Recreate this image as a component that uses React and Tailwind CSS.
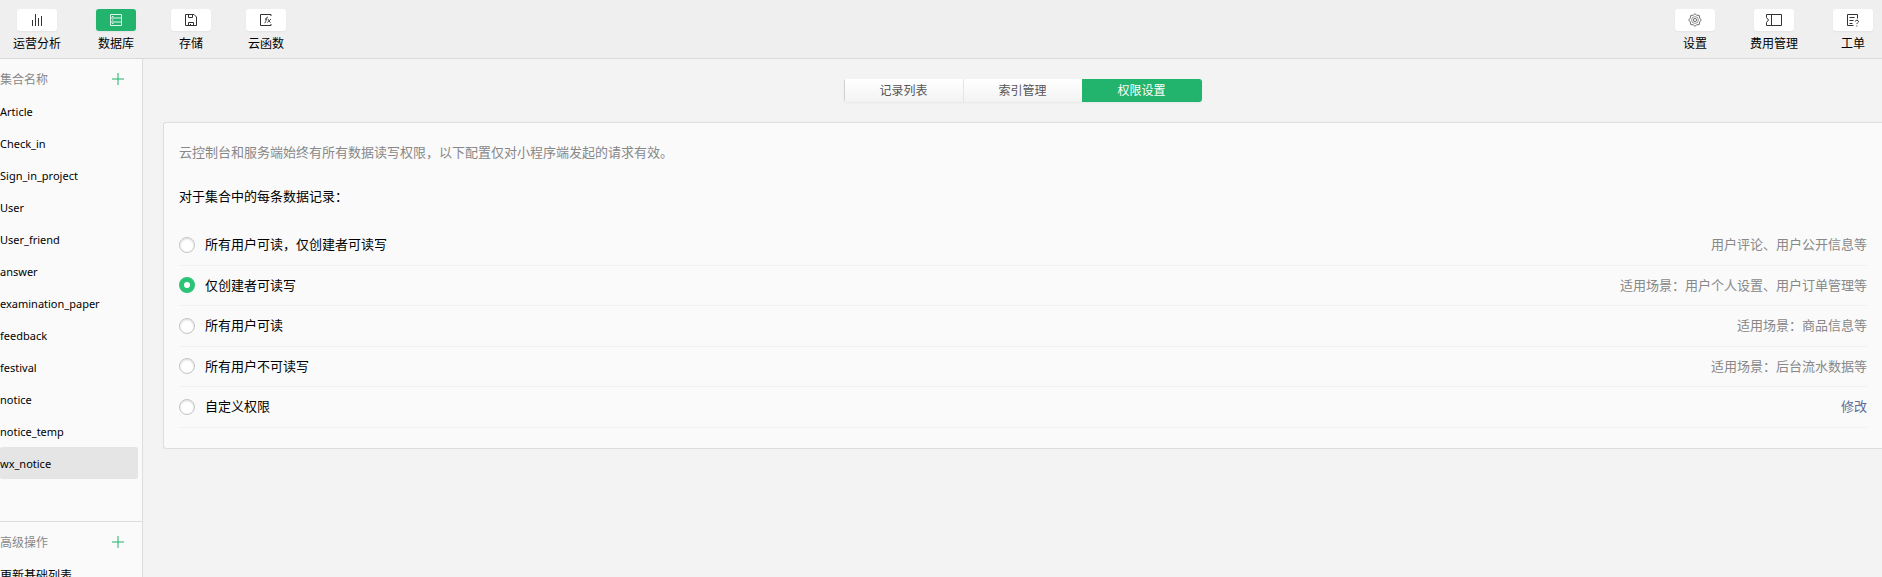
import { useState } from 'react';

const collections = [
  'Article',
  'Check_in',
  'Sign_in_project',
  'User',
  'User_friend',
  'answer',
  'examination_paper',
  'feedback',
  'festival',
  'notice',
  'notice_temp',
  'wx_notice',
];

const permissions = [
  { id: 'read-all', label: '所有用户可读，仅创建者可读写', hint: '用户评论、用户公开信息等' },
  { id: 'creator', label: '仅创建者可读写', hint: '适用场景：用户个人设置、用户订单管理等' },
  { id: 'read-only', label: '所有用户可读', hint: '适用场景：商品信息等' },
  { id: 'none', label: '所有用户不可读写', hint: '适用场景：后台流水数据等' },
  { id: 'custom', label: '自定义权限', action: '修改' },
];

function ChartIcon() {
  return (
    <svg width="12" height="12" viewBox="0 0 12 12" fill="none" stroke="currentColor" aria-hidden="true">
      <path d="M1.5 6V12M4.5 0V12M7.5 4V12M10.5 2V12" />
    </svg>
  );
}

function DatabaseIcon() {
  return (
    <svg width="12" height="12" viewBox="0 0 12 12" fill="none" stroke="currentColor" aria-hidden="true">
      <path d="M.5.5h11v11H.5z" opacity=".85" />
      <path d="M1 4h10M1 8h10" strokeWidth="1.5" opacity=".6" />
      <path d="M2 2.500h1.500M2 6h1.500M2 9.500h1.500" opacity=".8" />
    </svg>
  );
}

function SaveIcon() {
  return (
    <svg width="12" height="12" viewBox="0 0 12 12" fill="none" stroke="currentColor" aria-hidden="true">
      <path d="M.5.5h8.500l2.500 2.500v8.500H.5zM3.500.5v3h4v-3M3.500 11.500v-3h5v3M5.500 10v1.500" />
    </svg>
  );
}

function FunctionIcon() {
  return (
    <svg width="12" height="12" viewBox="0 0 12 12" fill="none" stroke="currentColor" aria-hidden="true">
      <path d="M11 2V.5H.5v11H11V10" />
      <path
        d="M8 3.300c-1-.4-1.500.1-1.700 1.200L5.700 7.700c-.2.900-.5 1.200-1.200 1M5 5h2.300M7.800 5.200c1.300 0 1.200 3.300 2.700 3.300M11 5 7.300 8.500"
        strokeWidth=".9"
      />
    </svg>
  );
}

function GearIcon() {
  return (
    <svg width="14" height="14" viewBox="0 0 14 14" fill="none" stroke="currentColor" strokeWidth=".7" aria-hidden="true">
      <path d="M7 .7 8.700 2.200 11.200 2.400 11.700 5.100 13.300 7 11.700 8.900 11.200 11.600 8.700 11.800 7 13.300 5.300 11.800 2.800 11.600 2.300 8.900 .7 7 2.300 5.100 2.800 2.400 5.300 2.200Z" />
      <circle cx="7" cy="7" r="3.400" opacity=".7" />
      <circle cx="7" cy="7" r="1.600" />
    </svg>
  );
}

function TicketIcon() {
  return (
    <svg width="16" height="12" viewBox="0 0 16 12" fill="none" stroke="currentColor" aria-hidden="true">
      <path d="M.5 3.500V.5h15v11H.5v-3L2.500 6ZM5.500.5v11" />
    </svg>
  );
}

function OrderIcon() {
  return (
    <svg width="12" height="13" viewBox="0 0 12 13" fill="none" stroke="currentColor" aria-hidden="true">
      <path d="M10.500 4.500V.5H.5v11h6M2.500 3.500h5M2.500 6.500h4M2.500 9.500h3" />
      <path d="M8.300 7.500c0-1.700 3.200-1.700 3.200 0 0 1.200-1.600 1.200-1.600 2.600M9.900 11.500v1" />
    </svg>
  );
}

const mainNav = [
  { label: '运营分析', icon: ChartIcon },
  { label: '数据库', icon: DatabaseIcon, active: true },
  { label: '存储', icon: SaveIcon },
  { label: '云函数', icon: FunctionIcon },
];

const sideNav = [
  { label: '设置', icon: GearIcon },
  { label: '费用管理', icon: TicketIcon },
  { label: '工单', icon: OrderIcon },
];

function NavButton({ label, icon: Icon, active }) {
  return (
    <button className="flex flex-col items-center gap-[5px] text-xs leading-4 text-black">
      <span
        className={`flex h-[22px] w-10 items-center justify-center rounded-[3px] shadow-xs ${
          active ? 'bg-[#22b46c] text-white' : 'bg-white text-[#333]'
        }`}
      >
        <Icon />
      </span>
      {label}
    </button>
  );
}

function SectionTitle({ title }) {
  return (
    <div className="flex h-9 items-center justify-between pt-1 pr-[18px] text-[#888]">
      <h2 className="pt-px">{title}</h2>
      <button className="text-[#22b46c]" aria-label={`添加${title}`}>
        <svg width="12" height="12" viewBox="0 0 12 12" stroke="currentColor" strokeWidth="2" aria-hidden="true">
          <path d="M6 0v12" opacity=".5" />
          <path d="M0 6h12" opacity=".5" />
        </svg>
      </button>
    </div>
  );
}

export default function App() {
  const [selected, setSelected] = useState('wx_notice');
  const [permission, setPermission] = useState('creator');

  return (
    <div className="flex h-screen flex-col overflow-hidden bg-[#f3f3f3] font-['Noto_Sans','Noto_Sans_CJK_SC',sans-serif] text-xs text-black">
      <header className="flex shrink-0 justify-between border-b border-[#d9d9d9] bg-[#efefef] pt-[9px] pr-[9px] pb-[6px] pl-[13px]">
        <nav className="flex gap-[35px]">
          {mainNav.map((item) => (
            <NavButton key={item.label} {...item} />
          ))}
        </nav>
        <nav className="flex gap-[35px]">
          {sideNav.map((item) => (
            <NavButton key={item.label} {...item} />
          ))}
        </nav>
      </header>

      <div className="flex min-h-0 flex-1">
        <aside className="w-[143px] shrink-0 overflow-hidden border-r border-[#dedede] bg-[#fafafa]">
          <section className="border-b border-[#dedede] pb-[42px]">
            <SectionTitle title="集合名称" />
            <ul className="pr-1">
              {collections.map((name) => (
                <li key={name}>
                  <button
                    onClick={() => setSelected(name)}
                    className={`block h-8 w-full rounded-[2px] pt-[3px] text-left text-[11px] ${
                      selected === name ? 'bg-[#e5e5e5]' : ''
                    }`}
                  >
                    {name}
                  </button>
                </li>
              ))}
            </ul>
          </section>
          <section>
            <SectionTitle title="高级操作" />
            <button className="block h-8 w-full pt-[3px] text-left">更新基础列表</button>
          </section>
        </aside>

        <main className="min-w-0 flex-1 py-5 pl-5">
          <div className="mx-auto mb-5 flex h-[23px] w-[358px] overflow-hidden rounded-[3px] text-[#555] shadow-xs">
            <button className="w-[119px] border-l border-[#d0d0d0] bg-linear-to-b from-white to-[#f3f3f3] pt-px">
              记录列表
            </button>
            <button className="w-[119px] border-l border-[#e5e5e5] bg-linear-to-b from-white to-[#f3f3f3] pt-px">
              索引管理
            </button>
            <button className="w-[120px] bg-[#22b46c] pt-px text-white">权限设置</button>
          </div>

          <section className="rounded-l-[3px] border border-r-0 border-[#dedede] bg-[#fafafa] px-[15px] pt-[19px] pb-5 text-[13px]">
            <p className="leading-5 text-[#888]">
              云控制台和服务端始终有所有数据读写权限，以下配置仅对小程序端发起的请求有效。
            </p>
            <p className="mt-6 leading-5">对于集合中的每条数据记录：</p>
            <ul className="mt-[19px] leading-normal">
              {permissions.map(({ id, label, hint, action }) => (
                <li key={id} className="flex items-center justify-between border-b border-[#f0f0f0] py-[10px]">
                  <label className="flex items-center gap-[10px]">
                    <input
                      type="radio"
                      name="permission"
                      checked={permission === id}
                      onChange={() => setPermission(id)}
                      className="size-4 appearance-none rounded-full border border-[#c4c4c4] bg-white shadow-[inset_0_1px_2px_rgba(0,0,0,0.15)] checked:border-5 checked:border-[#2bc477] checked:shadow-none"
                    />
                    {label}
                  </label>
                  {hint && <span className="text-[#888]">{hint}</span>}
                  {action && (
                    <a href="#" className="text-[#5b6b95]">
                      {action}
                    </a>
                  )}
                </li>
              ))}
            </ul>
          </section>
        </main>
      </div>
    </div>
  );
}
